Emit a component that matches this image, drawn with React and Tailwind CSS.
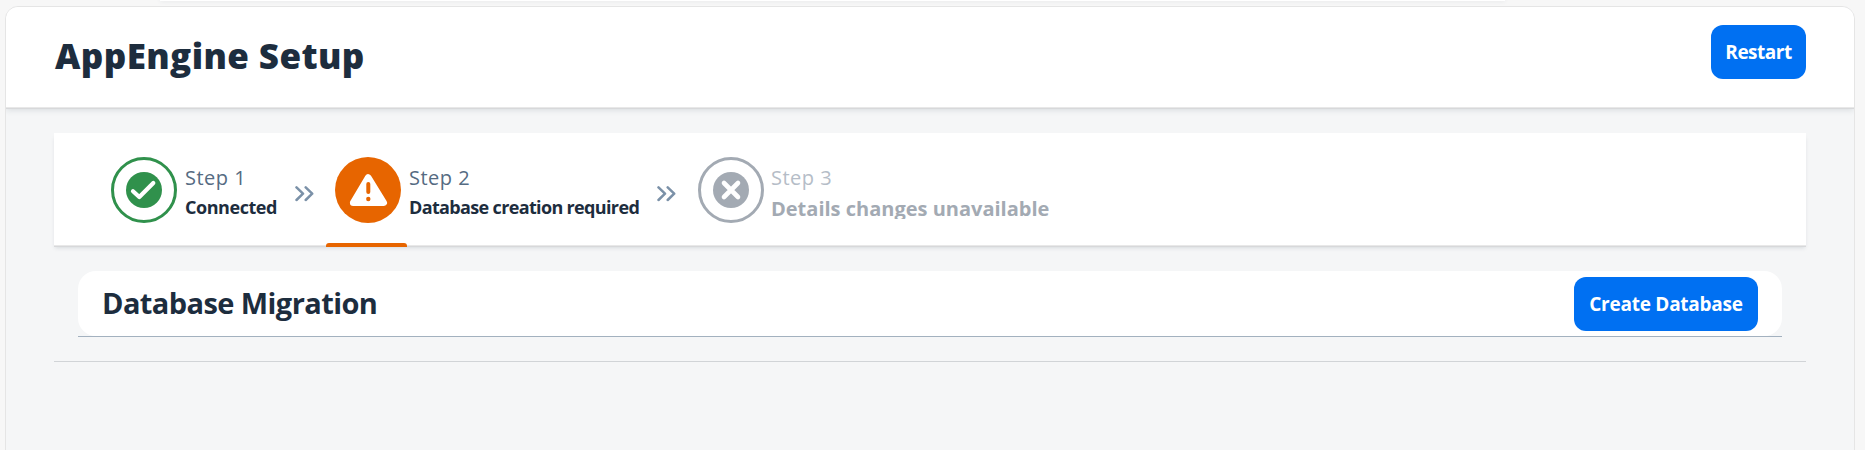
const sans = "font-['Open_Sans','Noto_Sans',sans-serif]";

function Chevrons() {
  return (
    <svg className="mt-[5px] h-4 w-[19px]" viewBox="0 0 19 16" fill="none" stroke="#7b91a8" strokeWidth="2.5" strokeLinecap="round" strokeLinejoin="round">
      <path d="M1.5 1.4 8 7.7 1.5 14M10.7 1.4 17.2 7.7 10.7 14" />
    </svg>
  );
}

function CheckIcon() {
  return (
    <svg className="size-[66px] shrink-0" viewBox="0 0 66 66" fill="none">
      <circle cx="33" cy="33" r="31.5" stroke="#30914c" strokeWidth="3" />
      <circle cx="33" cy="33" r="18" fill="#30914c" />
      <path d="M22 34.2 28.3 40 42.3 26" stroke="#fff" strokeWidth="4.2" strokeLinecap="round" strokeLinejoin="round" />
    </svg>
  );
}

function AlertIcon() {
  return (
    <svg className="size-[66px] shrink-0" viewBox="0 0 66 66">
      <circle cx="33" cy="33" r="33" fill="#e76500" />
      <path d="M33.2 20.5 48.7 45.7H18.2Z" fill="#fff" stroke="#fff" strokeWidth="6.6" strokeLinejoin="round" />
      <path d="M33.3 27V35" stroke="#e76500" strokeWidth="4" strokeLinecap="round" />
      <circle cx="33.3" cy="42" r="2.2" fill="#e76500" />
    </svg>
  );
}

function CloseIcon() {
  return (
    <svg className="size-[66px] shrink-0" viewBox="0 0 66 66" fill="none">
      <circle cx="33" cy="33" r="31.5" stroke="#a3aab3" strokeWidth="3" />
      <circle cx="33" cy="33" r="18" fill="#a3aab3" />
      <path d="M26 26 40 40M40 26 26 40" stroke="#fff" strokeWidth="4.6" strokeLinecap="round" />
    </svg>
  );
}

export default function App() {
  return (
    <div className={`flex h-[450px] w-[1865px] flex-col overflow-hidden bg-[#f7f7f7] ${sans}`}>
      <div className="mr-[360px] ml-[160px] h-px shrink-0 bg-white shadow-[0_0_4px_rgba(34,54,73,0.2)]" />
      <main className="mt-[5px] mr-[10px] ml-[5px] flex h-[480px] shrink-0 flex-col overflow-hidden rounded-t-[13px] border border-[#e5e5e5] bg-[#f5f6f7]">
        <header className="z-10 flex h-[100px] shrink-0 justify-between bg-white pr-12 pl-[49px] shadow-[0_1px_0_#e8e8e8,0_2px_0_#d7d8da,0_3px_6px_rgba(34,54,73,0.14)]">
          <h1 className="mt-[24px] text-[35px] leading-[50px] font-extrabold tracking-[0.4px] whitespace-nowrap text-[#1d2d3e]">AppEngine Setup</h1>
          <button className="mt-[18px] h-[54px] w-[95px] rounded-xl bg-[#0070f2] text-[19px] font-bold tracking-[-0.5px] whitespace-nowrap text-white">Restart</button>
        </header>

        <section className="mx-12 mt-[26px] flex h-[112px] shrink-0 items-start bg-white pt-6 pl-[57px] shadow-[0_1px_0_#e8e8e8,0_2px_0_#d7d8da,0_4px_4px_-1px_rgba(34,54,73,0.14)]">
          <div className="flex w-[184px] items-start">
            <CheckIcon />
            <div className="ml-2 whitespace-nowrap">
              <p className="mt-[8px] text-[20px] leading-[26px] tracking-[0.5px] text-[#556b82]">Step 1</p>
              <p className="mt-[4px] text-[18px] leading-6 font-bold tracking-[-0.45px] text-[#1d2d3e]">Connected</p>
            </div>
          </div>
          <div className="mt-[24px] w-[40px]"><Chevrons /></div>
          <div className="flex h-[90px] w-[322px] items-start">
            <div className="flex h-[90px] w-[66px] shrink-0 flex-col justify-between">
              <AlertIcon />
              <div className="-ml-[9px] h-1 w-[81px] rounded-t-[3px] bg-[#e76500]" />
            </div>
            <div className="ml-2 whitespace-nowrap">
              <p className="mt-[8px] text-[20px] leading-[26px] tracking-[0.5px] text-[#556b82]">Step 2</p>
              <p className="mt-[4px] text-[18px] leading-6 font-bold tracking-[-0.65px] text-[#1d2d3e]">Database creation required</p>
            </div>
          </div>
          <div className="mt-[24px] w-[41px]"><Chevrons /></div>
          <div className="flex items-start">
            <CloseIcon />
            <div className="ml-[7px] whitespace-nowrap">
              <p className="mt-[8px] text-[20px] leading-[26px] tracking-[0.5px] text-[#b5bdc7]">Step 3</p>
              <p className="mt-[5px] h-[23px] overflow-hidden text-[20px] leading-[26px] font-bold text-[#a3aab3]">Details changes unavailable</p>
            </div>
          </div>
        </section>

        <section className="mx-12 mt-[26px] h-[91px] shrink-0 border-b border-[#d1d4d7] px-6">
          <div className="border-b border-[#a3b1bf]">
            <div className="flex h-[65px] justify-between rounded-[18px] bg-white px-6">
              <h2 className="mt-[12px] text-[29px] leading-[40px] font-bold tracking-[-0.58px] whitespace-nowrap text-[#1d2d3e]">Database Migration</h2>
              <button className="mt-[6px] h-[54px] w-[184px] rounded-xl bg-[#0070f2] text-[19px] font-bold tracking-[-0.25px] whitespace-nowrap text-white">Create Database</button>
            </div>
          </div>
        </section>
      </main>
    </div>
  );
}
